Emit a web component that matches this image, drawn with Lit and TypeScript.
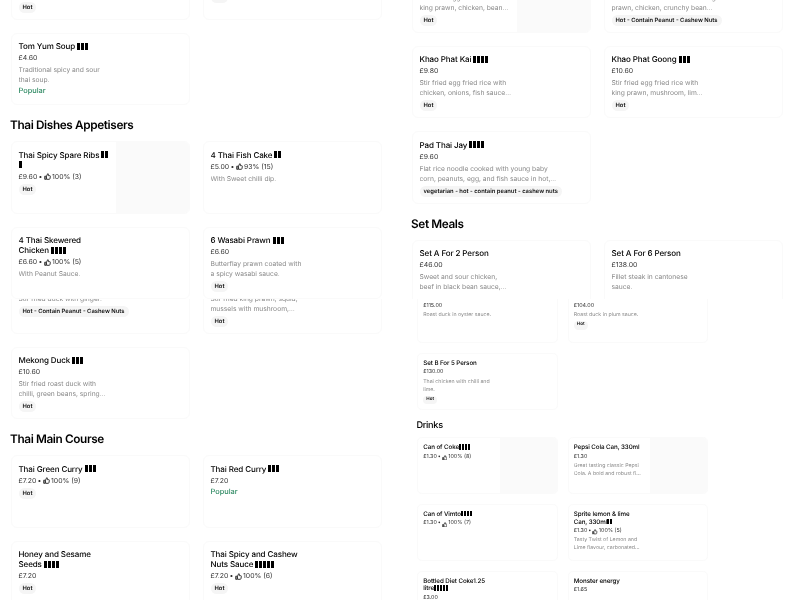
import { LitElement, html, css } from "lit";
import { customElement } from "lit/decorators.js";

interface Item {
  t: string;
  bars?: number;
  price: string;
  like?: string;
  d?: string;
  tag?: string;
  pop?: boolean;
  img?: boolean;
}

type Block = { h: string } | { cards: Item[] };

const HOT = "Hot";
const NUTS = "Hot - Contain Peanut - Cashew Nuts";

const leftTop: Block[] = [
  { cards: [
    { t: "Tom Kha Soup", bars: 3, price: "£4.60", d: "Chicken in coconut soup with galangal and lime leaf.", tag: HOT },
    { t: "Thai Prawn Soup", bars: 2, price: "£5.20", d: "Hot and sour prawn soup.", tag: HOT },
  ] },
  { cards: [{ t: "Tom Yum Soup", bars: 3, price: "£4.60", d: "Traditional spicy and sour thai soup.", pop: true }] },
  { h: "Thai Dishes Appetisers" },
  { cards: [
    { t: "Thai Spicy Spare Ribs", bars: 3, price: "£9.60", like: "100% (3)", tag: HOT, img: true },
    { t: "4 Thai Fish Cake", bars: 2, price: "£5.00", like: "93% (15)", d: "With Sweet chilli dip." },
  ] },
  { cards: [
    { t: "4 Thai Skewered Chicken", bars: 4, price: "£6.60", like: "100% (5)", d: "With Peanut Sauce." },
    { t: "6 Wasabi Prawn", bars: 3, price: "£6.60", d: "Butterflay prawn coated with a spicy wasabi sauce.", tag: HOT },
  ] },
];

const leftBottom: Block[] = [
  { cards: [
    { t: "Duck Pad Khing", bars: 3, price: "£10.60", d: "Stir fried duck with ginger.", tag: NUTS },
    { t: "Pad Cha Talay", bars: 3, price: "£10.60", d: "Stir fried king prawn, squid, mussels with mushroom, chilli and basil.", tag: HOT },
  ] },
  { cards: [{ t: "Mekong Duck", bars: 3, price: "£10.60", d: "Stir fried roast duck with chilli, green beans, spring onions and basil leaves.", tag: HOT }] },
  { h: "Thai Main Course" },
  { cards: [
    { t: "Thai Green Curry", bars: 3, price: "£7.20", like: "100% (9)", tag: HOT },
    { t: "Thai Red Curry", bars: 3, price: "£7.20", pop: true },
  ] },
  { cards: [
    { t: "Honey and Sesame Seeds", bars: 4, price: "£7.20", tag: HOT },
    { t: "Thai Spicy and Cashew Nuts Sauce", bars: 5, price: "£7.20", like: "100% (6)", tag: HOT },
  ] },
];

const rightTop: Block[] = [
  { cards: [
    { t: "Pad Mee Sua", bars: 3, price: "£9.80", d: "Stir fried egg noodles with king prawn, chicken, bean sprouts and egg.", tag: HOT, img: true },
    { t: "Pad Thai", bars: 3, price: "£9.80", d: "Flat rice noodle cooked with king prawn, chicken, crunchy bean sprouts and peanut.", tag: NUTS },
  ] },
  { cards: [
    { t: "Khao Phat Kai", bars: 4, price: "£9.80", d: "Stir fried egg fried rice with chicken, onions, fish sauce and chilli paste.", tag: HOT },
    { t: "Khao Phat Goong", bars: 3, price: "£10.60", d: "Stir fried egg fried rice with king prawn, mushroom, lime and chilli.", tag: HOT },
  ] },
  { cards: [{ t: "Pad Thai Jay", bars: 4, price: "£9.60", d: "Flat rice noodle cooked with young baby corn, peanuts, egg, and fish sauce in hot, sweet sauce.", tag: "vegetarian - hot - contain peanut - cashew nuts" }] },
  { h: "Set Meals" },
  { cards: [
    { t: "Set A For 2 Person", price: "£46.00", d: "Sweet and sour chicken, beef in black bean sauce, egg fried rice." },
    { t: "Set A For 6 Person", price: "£138.00", d: "Fillet steak in cantonese sauce." },
  ] },
];

const rightBottom: Block[] = [
  { cards: [
    { t: "Set A For 5 Person", price: "£115.00", d: "Roast duck in oyster sauce." },
    { t: "Set B For 4 Person", price: "£104.00", d: "Roast duck in plum sauce.", tag: HOT },
  ] },
  { cards: [{ t: "Set B For 5 Person", price: "£130.00", d: "Thai chicken with chilli and lime.", tag: HOT }] },
  { h: "Drinks" },
  { cards: [
    { t: "Can of Coke", bars: 4, price: "£1.30", like: "100% (8)", img: true },
    { t: "Pepsi Cola Can, 330ml", price: "£1.30", d: "Great tasting classic Pepsi Cola. A bold and robust fizz with a refreshing taste.", img: true },
  ] },
  { cards: [
    { t: "Can of Vimto", bars: 4, price: "£1.30", like: "100% (7)" },
    { t: "Sprite lemon & lime Can, 330ml", bars: 2, price: "£1.30", like: "100% (5)", d: "Tasty Twist of Lemon and Lime flavour, carbonated soft drink." },
  ] },
  { cards: [
    { t: "Bottled Diet Coke1.25 litre", bars: 5, price: "£3.00" },
    { t: "Monster energy", price: "£1.65" },
  ] },
];

const thumb = html`<svg class="thumb" viewBox="0 0 10 10" aria-hidden="true">
  <path d="M1 4.6h1.8v4.4H1zM3.6 4.4 5.3 1c.8 0 1.2.6 1.1 1.3l-.2 1.5h2c.6 0 1 .5.9 1.1L8.5 8.2c-.1.5-.5.8-1 .8H3.6z" fill="none" stroke="currentColor" stroke-width="1.4" stroke-linejoin="round"/>
</svg>`;

@customElement("app-root")
export class AppRoot extends LitElement {
  static styles = css`
    :host {
      display: grid;
      grid-template-columns: 400px 400px;
      grid-template-rows: 299px 301px;
      width: 800px;
      height: 600px;
      overflow: hidden;
      background: #fff;
      font-family: Inter, "Liberation Sans", sans-serif;
      color: #000;
      text-rendering: geometricPrecision;
      filter: blur(0.25px);
    }
    .pane { overflow: hidden; min-width: 0; min-height: 0; }
    .flow { display: flex; flex-direction: column; gap: 13px; }
    .lt .flow { margin: -53px 0 0 11px; }
    .lb .flow { margin: -38px 0 0 11px; }
    .rt .flow { margin: -40px 0 0 12px; }
    .rb { zoom: 0.78; }
    .rb .flow { margin: -16px 0 0 22px; }
    .rb .row { grid-template-columns: 180px 180px; }
    .rb h2 { margin: 1px 0 -6px -1px; font-weight: 500; }
    .rb .bar { width: 2.56px; margin-right: 1.28px; }
    .rb .bar.first { margin-left: 0; }
    .rb .info { min-width: 89.5px; }
    .row { display: grid; grid-template-columns: 179px 179px; gap: 13px; }
    h2 {
      margin: 0 0 -4px -1px;
      font-size: 11.8px;
      line-height: 14px;
      font-weight: 600;
      letter-spacing: -0.38px;
      color: #000;
    }
    .card {
      box-sizing: border-box;
      min-height: 72.5px;
      border: 1px solid #fafafa;
      border-radius: 6px;
      display: flex;
      justify-content: space-between;
      overflow: hidden;
      background: #fff;
    }
    .info { width: fit-content; min-width: 92px; padding: 7.5px 0 6px 6.5px; flex: none; }
    .img { width: 73px; flex: none; background: #fafafa; }
    .title { width: 0; min-width: 100%; font-size: 8px; line-height: 10px; font-weight: 500; letter-spacing: -0.1px; }
    .bar { display: inline-block; width: 3px; height: 7px; margin-right: 1px; background: #000; vertical-align: -0.5px; }
    .bar.first { margin-left: 2px; }
    .meta { display: flex; align-items: center; gap: 1.3px; margin-top: 2px; font-size: 6.9px; line-height: 10px; color: #333; white-space: nowrap; }
    .thumb { width: 7px; height: 7px; flex: none; }
    .desc {
      width: 0;
      min-width: 100%;
      margin-top: 2px;
      font-size: 6.7px;
      line-height: 10px;
      color: #888;
      display: -webkit-box;
      -webkit-box-orient: vertical;
      -webkit-line-clamp: 2;
      overflow: hidden;
    }
    .tag {
      display: block;
      width: fit-content;
      margin-top: 2px;
      padding: 0 4px;
      height: 11px;
      border-radius: 6px;
      background: #f5f5f5;
      font-size: 5.85px;
      line-height: 11px;
      font-weight: 600;
      white-space: nowrap;
      color: #111;
    }
    .pop { margin-top: 1px; font-size: 7.4px; line-height: 10px; font-weight: 500; color: #2f8a63; }
  `;

  private card(c: Item) {
    return html`<div class="card">
      <div class="info">
        <div class="title">${c.t}${Array.from({ length: c.bars ?? 0 }, (_, i) => html`<span class=${i === 0 ? "bar first" : "bar"}></span>`)}</div>
        <div class="meta">${c.price}${c.like ? html`<span>•</span>${thumb}<span>${c.like}</span>` : ""}</div>
        ${c.d ? html`<div class="desc">${c.d}</div>` : ""}
        ${c.tag ? html`<span class="tag">${c.tag}</span>` : ""}
        ${c.pop ? html`<div class="pop">Popular</div>` : ""}
      </div>
      ${c.img ? html`<div class="img"></div>` : ""}
    </div>`;
  }

  private pane(cls: string, blocks: Block[]) {
    return html`<section class="pane ${cls}"><div class="flow">
      ${blocks.map((b) => "h" in b ? html`<h2>${b.h}</h2>` : html`<div class="row">${b.cards.map((c) => this.card(c))}</div>`)}
    </div></section>`;
  }

  render() {
    return html`
      ${this.pane("lt", leftTop)}
      ${this.pane("rt", rightTop)}
      ${this.pane("lb", leftBottom)}
      ${this.pane("rb", rightBottom)}
    `;
  }
}
